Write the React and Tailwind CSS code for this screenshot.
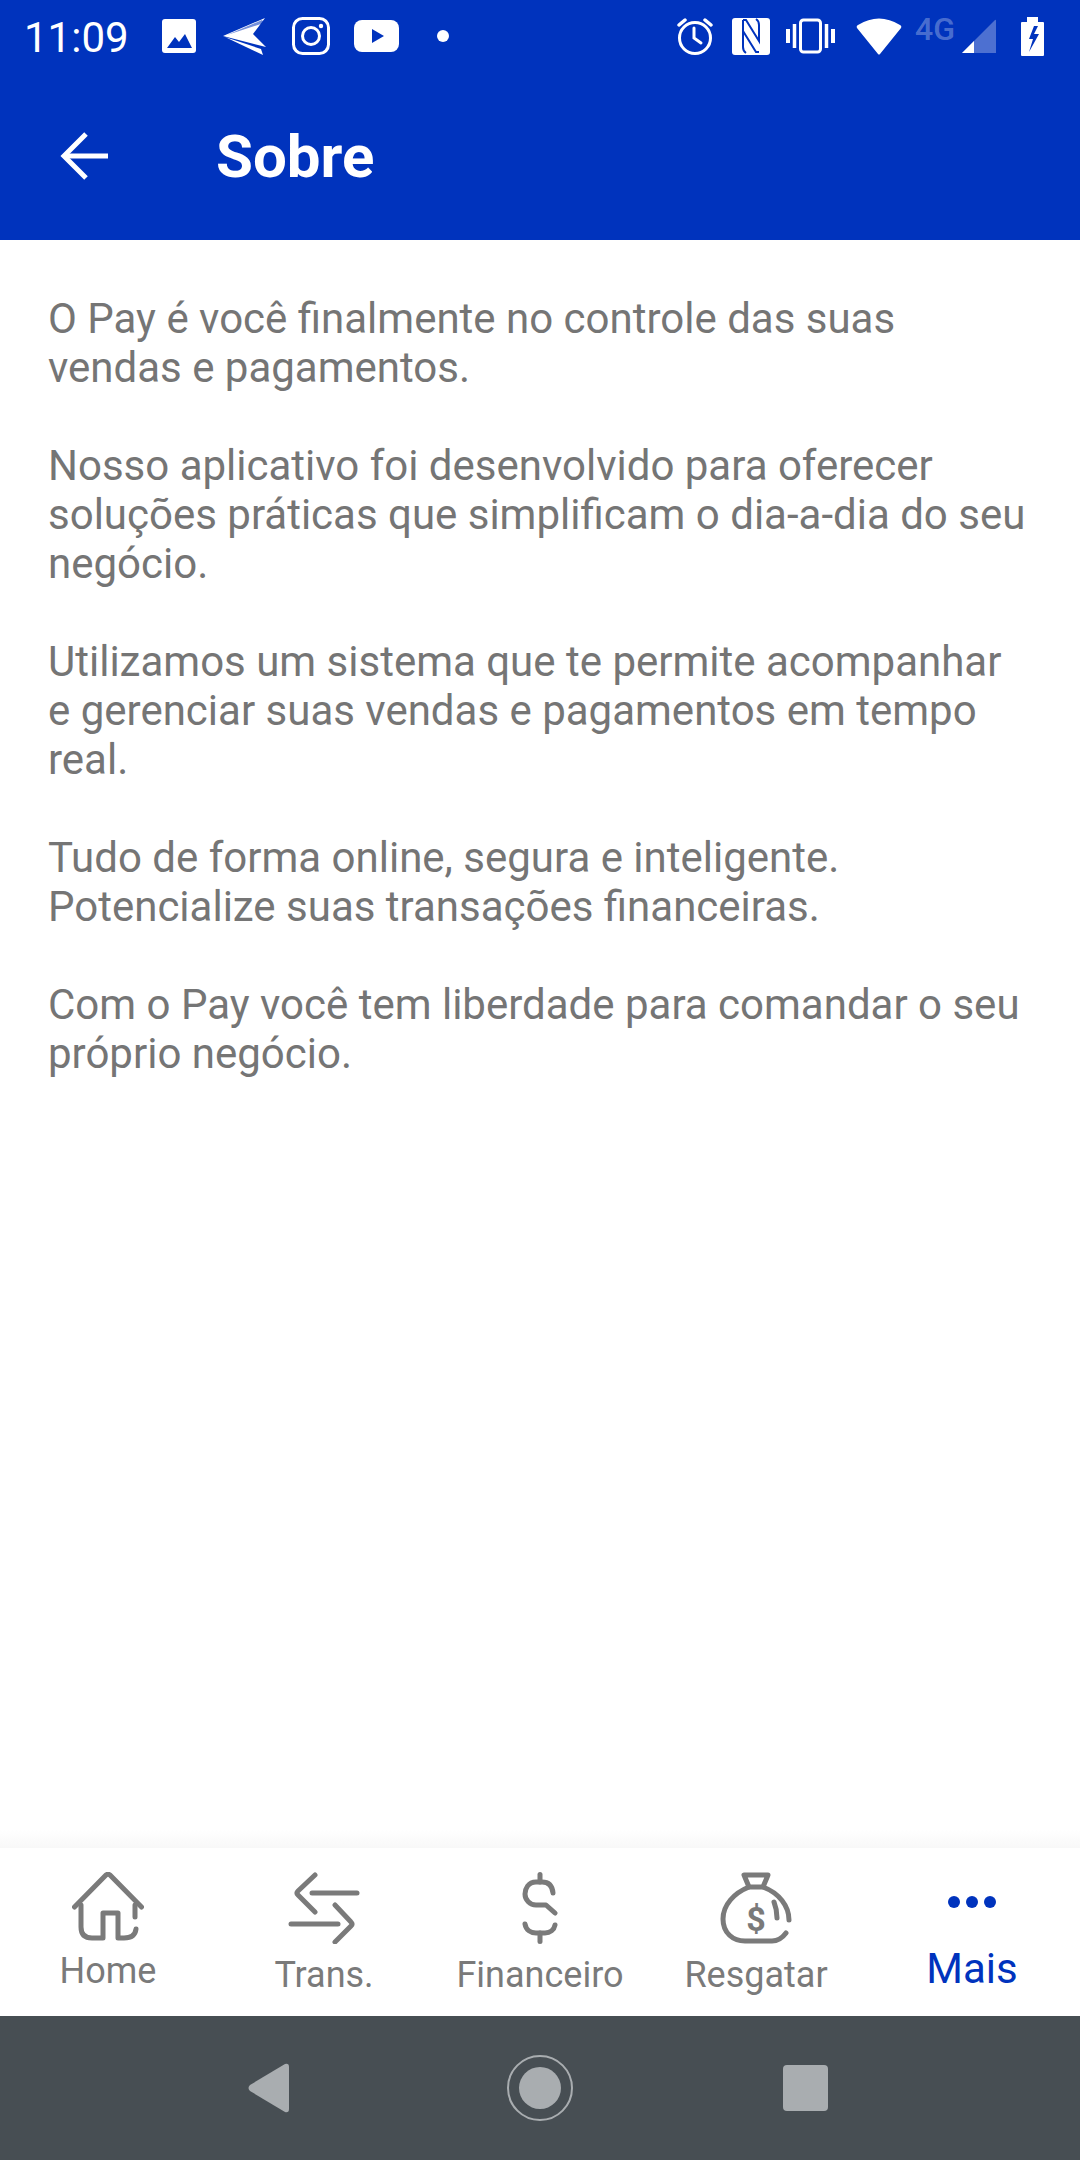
const paragraphs = [
  "O Pay é você finalmente no controle das suas vendas e pagamentos.",
  "Nosso aplicativo foi desenvolvido para oferecer soluções práticas que simplificam o dia-a-dia do seu negócio.",
  "Utilizamos um sistema que te permite acompanhar e gerenciar suas vendas e pagamentos em tempo real.",
  "Tudo de forma online, segura e inteligente. Potencialize suas transações financeiras.",
  "Com o Pay você tem liberdade para comandar o seu próprio negócio.",
];

const Gray = "#7a7a7a";

function HomeIcon() {
  return (
    <svg width="72" height="72" viewBox="0 0 72 72" fill="none" stroke={Gray} strokeWidth="5" strokeLinecap="round" strokeLinejoin="round">
      <path d="M2.500 35 L34 3 Q36 1.500 38 3 L69.500 35" />
      <path d="M9 33 V55 Q9 66 20 66 H31 V41 H46 V66 H52 Q63 66 64 57" />
      <path d="M63 33 V45" />
    </svg>
  );
}
function TransIcon() {
  return (
    <svg width="72" height="72" viewBox="0 0 72 72" fill="none" stroke={Gray} strokeWidth="5" strokeLinecap="round" strokeLinejoin="round">
      <path d="M27 3 L10 19 Q8 21 10 23 L27 40" />
      <path d="M24 21 H69" />
      <path d="M47 33 L63 50 Q65 52 63 54 L47 70" />
      <path d="M3 52 H50" />
    </svg>
  );
}
function DollarIcon() {
  return (
    <svg width="36" height="72" viewBox="0 0 36 72" fill="none" stroke={Gray} strokeWidth="5" strokeLinecap="round" strokeLinejoin="round">
      <path d="M18 2.500 V10" />
      <path d="M31 21 Q30 10 20 10 H14 C6 10 3 17 3 22 C3 28 8 33 14 33 H24 L33 41" />
      <path d="M3 52 C4 58 9 61 14 61 H23 C28 61 32 58 33 53" />
      <path d="M18 61 V69.500" />
    </svg>
  );
}
function BagIcon() {
  return (
    <svg width="72" height="72" viewBox="0 0 72 72" fill="none" stroke={Gray} strokeWidth="5" strokeLinecap="round" strokeLinejoin="round">
      <path d="M24 3 H48 L43 15 H29 Z" />
      <path d="M29 15 C14 21 3 33 3 47 C3 61 13 69 25 69 H52 C59 69 63 65 66 61" />
      <path d="M43 15 C59 21 69 34 69 48" />
      <path d="M54 30 C56 35 57 40 57 46" />
      <text x="36" y="59" textAnchor="middle" fontFamily="Roboto" fontWeight="700" fontSize="34" fill={Gray} stroke="none">$</text>
    </svg>
  );
}

function NavItem({ icon, label, offset }) {
  return (
    <div className="flex flex-col items-center">
      <div className="flex h-[72px] items-start justify-center">{icon}</div>
      <span className={`text-[36px] leading-[40px] text-[#7a7a7a] whitespace-nowrap ${offset}`}>{label}</span>
    </div>
  );
}

export default function App() {
  return (
    <div className="flex h-[2160px] w-[1080px] flex-col bg-white font-['Roboto',sans-serif]">
      <div className="h-[240px] bg-[#0033bd] text-white">
        <div className="flex h-[72px] items-center">
          <span className="ml-[24px] mt-[3px] w-[106px] text-[42px] leading-[48px]">11:09</span>
          <svg className="ml-[32px]" width="34" height="34" viewBox="0 0 34 34">
            <rect width="34" height="34" rx="3" fill="white" />
            <path d="M5 29 L13 18 L17 23 L23 15 L30 29 Z" fill="#0033bd" />
          </svg>
          <svg className="ml-[27px]" width="44" height="38" viewBox="0 0 44 38" fill="white">
            <path d="M0 19 L42 1 L30 17 L43 30 Z" />
            <path d="M2 20 L40 38 L38 32 Z" />
            <path d="M4 18 L41 6 L39 3 Z" fill="#0033bd" opacity="0.55" />
          </svg>
          <svg className="ml-[25px]" width="38" height="38" viewBox="0 0 38 38" fill="none" stroke="white" strokeWidth="3">
            <rect x="1.500" y="1.500" width="35" height="35" rx="9" />
            <circle cx="19" cy="19" r="8.500" />
            <circle cx="29" cy="9" r="2.200" fill="white" stroke="none" />
          </svg>
          <svg className="ml-[24px]" width="45" height="32" viewBox="0 0 45 32">
            <rect width="45" height="32" rx="8" fill="white" />
            <path d="M18 9 L30 16 L18 23 Z" fill="#0033bd" />
          </svg>
          <span className="ml-[38px] h-[12px] w-[12px] rounded-full bg-white" />
          <div className="flex-1" />
          <svg width="36" height="38" viewBox="0 0 36 38" fill="none" stroke="white" strokeWidth="3" strokeLinecap="round">
            <circle cx="18" cy="21" r="15.500" />
            <path d="M17 11 V21 L24 26" />
            <path d="M2 8 L8 3 M34 8 L28 3" strokeWidth="3.500" />
          </svg>
          <svg className="ml-[19px]" width="38" height="38" viewBox="0 0 38 38">
            <rect width="38" height="37" y="1" rx="3" fill="white" />
            <path d="M11 3 V30 Q11 34 14 36 M11 3 H14 L27 24 V8 Q27 4 24 2 M27 35 H24 L11 14" fill="none" stroke="#0033bd" strokeWidth="2" />
          </svg>
          <svg className="ml-[16px]" width="49" height="36" viewBox="0 0 49 36" fill="none" stroke="white">
            <rect x="14.500" y="2" width="20" height="32" rx="3" strokeWidth="3" />
            <path d="M2 11 V25 M47 11 V25" strokeWidth="4" />
            <path d="M8.500 6 V30 M40.500 6 V30" strokeWidth="3.500" />
          </svg>
          <svg className="ml-[21px]" width="46" height="37" viewBox="0 0 46 37">
            <path d="M1 10 Q0 8 2 7 Q23 -6 44 7 Q46 8 45 10 L24 36 Q23 37 22 36 Z" fill="white" />
          </svg>
          <span className="ml-[13px] mb-[15px] w-[41px] text-[32px] leading-[26px] font-medium text-white/30 whitespace-nowrap">4G</span>
          <svg className="ml-[6px]" width="34" height="35" viewBox="0 0 34 35">
            <path d="M0 34 L33 1 Q34 0 34 2 V34 Z" fill="white" fillOpacity="0.3" />
            <path d="M0 34 L12 22 V34 Z" fill="white" />
          </svg>
          <svg className="ml-[25px] mr-[36px]" width="23" height="39" viewBox="0 0 23 39">
            <path d="M6 0 H17 V5 H22 Q23 5 23 6 V38 Q23 39 22 39 H1 Q0 39 0 38 V6 Q0 5 1 5 H6 Z" fill="white" />
            <path d="M13 9 L8 22 H12 L8 35 L18 17 H13 L17 9 Z" fill="#0033bd" />
          </svg>
        </div>
        <div className="flex h-[168px] items-center">
          <svg className="ml-[60px]" width="48" height="48" viewBox="0 0 48 48" fill="none" stroke="white" strokeWidth="5">
            <path d="M48 24 H4" />
            <path d="M26 2 L4 24 L26 46" />
          </svg>
          <h1 className="ml-[108px] mt-[2px] text-[60px] leading-[64px] font-bold">Sobre</h1>
        </div>
      </div>

      <main className="flex flex-1 flex-col gap-[49px] px-[48px] pt-[54px] text-[42px] leading-[49px] text-[#757575]">
        {paragraphs.map((p) => (
          <p key={p}>{p}</p>
        ))}
      </main>

      <div className="h-[18px] bg-gradient-to-b from-white to-[#f8f8f8]" />
      <nav className="grid h-[168px] grid-cols-5 pt-[24px]">
        <NavItem icon={<HomeIcon />} label="Home" offset="mt-[7px]" />
        <NavItem icon={<TransIcon />} label="Trans." offset="mt-[11px]" />
        <NavItem icon={<DollarIcon />} label="Financeiro" offset="mt-[11px]" />
        <NavItem icon={<BagIcon />} label="Resgatar" offset="mt-[11px]" />
        <div className="flex flex-col items-center">
          <div className="flex h-[72px] items-start gap-[6px] pt-[24px]">
            <span className="h-[12px] w-[12px] rounded-full bg-[#0033bd]" />
            <span className="h-[12px] w-[12px] rounded-full bg-[#0033bd]" />
            <span className="h-[12px] w-[12px] rounded-full bg-[#0033bd]" />
          </div>
          <span className="mt-[2px] text-[42px] leading-[46px] text-[#0033bd]">Mais</span>
        </div>
      </nav>

      <div className="flex h-[144px] items-center bg-[#474e53]">
        <svg className="ml-[248px]" width="42" height="50" viewBox="0 0 42 50">
          <path d="M2 22 L37 1 Q41 0 41 4 V46 Q41 50 37 49 L2 28 Q-1 25 2 22 Z" fill="#a9adb0" />
        </svg>
        <div className="ml-[217px] flex h-[66px] w-[66px] items-center justify-center rounded-full border-2 border-[#a9adb0]">
          <span className="h-[42px] w-[42px] rounded-full bg-[#a9adb0]" />
        </div>
        <span className="ml-[210px] h-[46px] w-[45px] rounded-[4px] bg-[#a9adb0]" />
      </div>
    </div>
  );
}
